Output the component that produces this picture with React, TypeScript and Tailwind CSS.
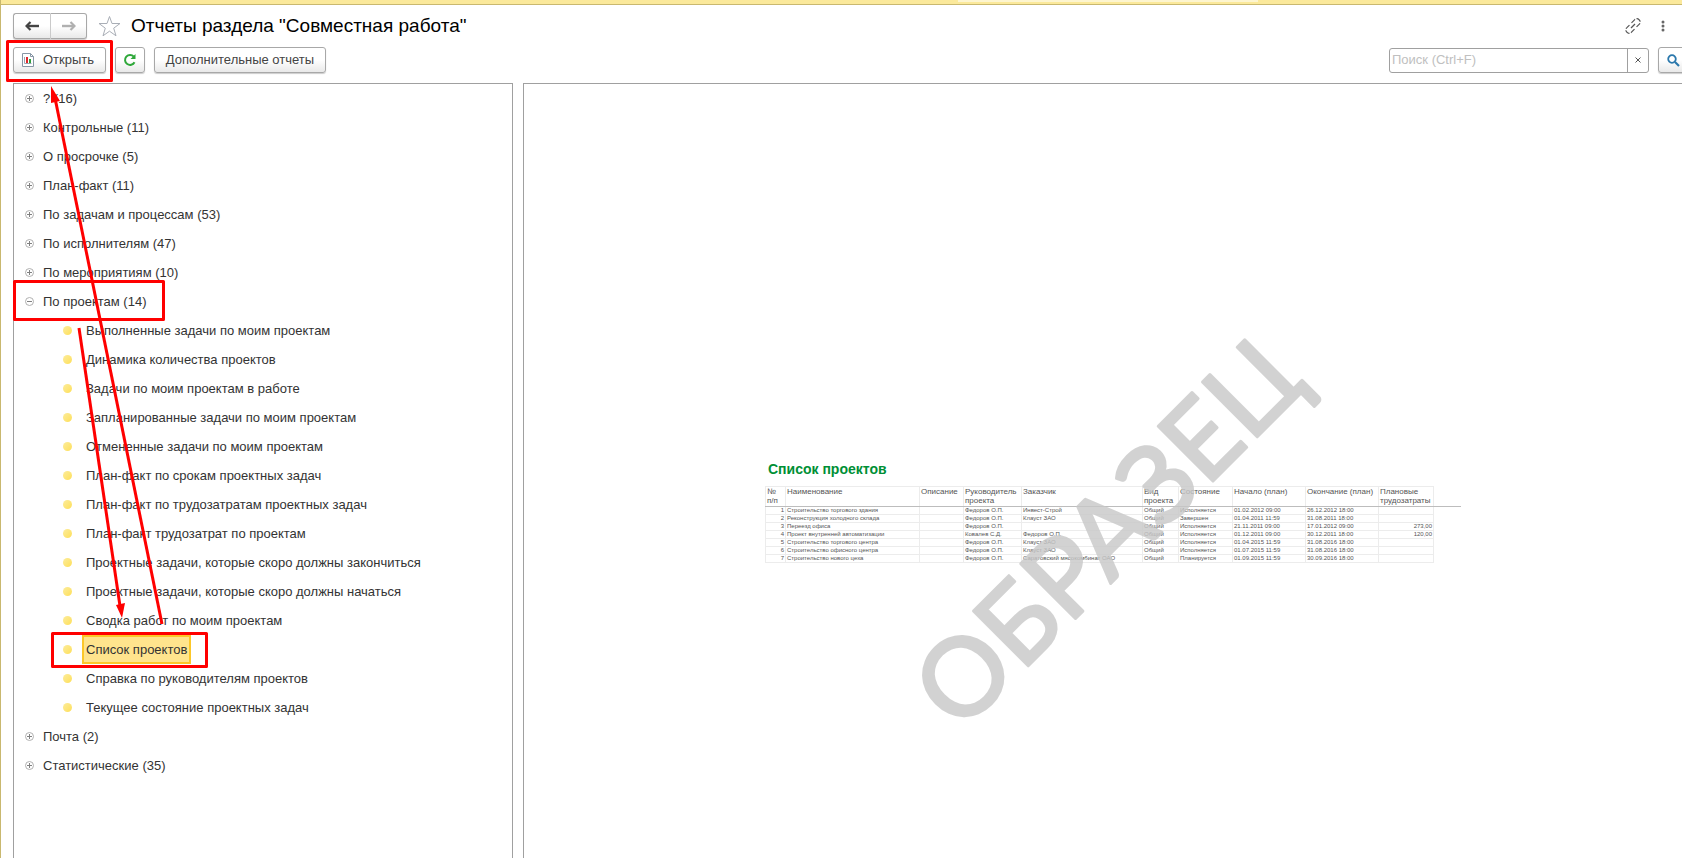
type Group = { title: string; count: number; items?: string[] };

const groups: Group[] = [
  { title: "?", count: 16 },
  { title: "Контрольные", count: 11 },
  { title: "О просрочке", count: 5 },
  { title: "План-факт", count: 11 },
  { title: "По задачам и процессам", count: 53 },
  { title: "По исполнителям", count: 47 },
  { title: "По мероприятиям", count: 10 },
  {
    title: "По проектам",
    count: 14,
    items: [
      "Выполненные задачи по моим проектам",
      "Динамика количества проектов",
      "Задачи по моим проектам в работе",
      "Запланированные задачи по моим проектам",
      "Отмененные задачи по моим проектам",
      "План-факт по срокам проектных задач",
      "План-факт по трудозатратам проектных задач",
      "План-факт трудозатрат по проектам",
      "Проектные задачи, которые скоро должны закончиться",
      "Проектные задачи, которые скоро должны начаться",
      "Сводка работ по моим проектам",
      "Список проектов",
      "Справка по руководителям проектов",
      "Текущее состояние проектных задач",
    ],
  },
  { title: "Почта", count: 2 },
  { title: "Статистические", count: 35 },
];

const selected = "Список проектов";

const columns = [
  "№ п/п",
  "Наименование",
  "Описание",
  "Руководитель проекта",
  "Заказчик",
  "Вид проекта",
  "Состояние",
  "Начало (план)",
  "Окончание (план)",
  "Плановые трудозатраты",
];

const projects = [
  ["1", "Строительство торгового здания", "", "Федоров О.П.", "Инвест-Строй", "Общий", "Исполняется", "01.02.2012 09:00", "26.12.2012 18:00", ""],
  ["2", "Реконструкция холодного склада", "", "Федоров О.П.", "Клауст ЗАО", "Общий", "Завершен", "01.04.2011 11:59", "31.08.2011 18:00", ""],
  ["3", "Переезд офиса", "", "Федоров О.П.", "", "Общий", "Исполняется", "21.11.2011 09:00", "17.01.2012 09:00", "273,00"],
  ["4", "Проект внутренней автоматизации", "", "Ковалев С.Д.", "Федоров О.П.", "Общий", "Исполняется", "01.12.2011 09:00", "30.12.2011 18:00", "120,00"],
  ["5", "Строительство торгового центра", "", "Федоров О.П.", "Клауст ЗАО", "Общий", "Исполняется", "01.04.2015 11:59", "31.08.2016 18:00", ""],
  ["6", "Строительство офисного центра", "", "Федоров О.П.", "Клауст ЗАО", "Общий", "Исполняется", "01.07.2015 11:59", "31.08.2016 18:00", ""],
  ["7", "Строительство нового цеха", "", "Федоров О.П.", "Саратовский мясокомбинат ОАО", "Общий", "Планируется", "01.09.2015 11:59", "30.09.2016 18:00", ""],
];

const buttonClass =
  "flex items-center h-[26px] rounded-[3px] border border-[#a8a8a8] bg-linear-to-b from-white from-50% to-[#e9e9e9] text-[#444] shadow-[0_1px_1px_rgba(0,0,0,0.2)]";

function ToggleIcon({ open }: { open: boolean }) {
  return (
    <svg width="9" height="9" viewBox="0 0 9 9" fill="none">
      <circle cx="4.5" cy="4.5" r="4" stroke="#b0b0b0" />
      <path d={open ? "M2 4.5h5" : "M2 4.5h5M4.5 2v5"} stroke="#808080" />
    </svg>
  );
}

function ArrowIcon({ className }: { className: string }) {
  return (
    <svg width="14" height="10" viewBox="0 0 14 10" fill="none" stroke="currentColor" className={className}>
      <path d="M2 5h12" strokeWidth="2.4" />
      <path d="M5.500 1L1.500 5l4 4" strokeWidth="2.2" />
    </svg>
  );
}

function Header() {
  return (
    <header className="mt-2 flex h-[26px] items-center">
      <div className="flex">
        <button aria-label="Назад" className={`${buttonClass} w-[38px] justify-center rounded-r-none border-r-[#cfcfcf]`}>
          <ArrowIcon className="text-[#444]" />
        </button>
        <button aria-label="Вперед" className={`${buttonClass} w-[36px] justify-center rounded-l-none border-l-0`}>
          <ArrowIcon className="rotate-180 text-[#b0b0b0]" />
        </button>
      </div>
      <button aria-label="В избранное" className="ml-[11px]">
        <svg width="23" height="22" viewBox="0 0 23 22" fill="none">
          <path
            d="M11.500 1.500l2.500 7h8l-6.300 4.700 2.300 7.600-6.500-4.600-6.500 4.600 2.300-7.600L1 8.500h8z"
            stroke="#a9aeb6"
          />
        </svg>
      </button>
      <h1 className="ml-[10px] text-[19px] leading-6 text-black">Отчеты раздела "Совместная работа"</h1>
      <button aria-label="Ссылка" className="ml-auto">
        <svg width="16" height="16" viewBox="0 0 16 16" fill="none" stroke="#555" strokeWidth="1.200">
          <path d="M6.500 4.800l3-3a3 3 0 0 1 4.600 0 3 3 0 0 1 0 4.600l-3 3" strokeDasharray="5 1.500" />
          <path d="M9.500 11.200l-3 3a3 3 0 0 1-4.600 0 3 3 0 0 1 0-4.600l3-3" strokeDasharray="5 1.500" />
          <path d="M6 10l4-4" />
        </svg>
      </button>
      <button aria-label="Еще" className="mr-[38px] ml-[20px]">
        <svg width="4" height="12" viewBox="0 0 4 12" fill="#666">
          <circle cx="2" cy="2" r="1.500" />
          <circle cx="2" cy="6" r="1.500" />
          <circle cx="2" cy="10" r="1.500" />
        </svg>
      </button>
    </header>
  );
}

function Toolbar() {
  return (
    <div className="mt-2 flex items-center">
      <button className={`${buttonClass} w-[93px] gap-[9px] pl-2`}>
        <svg width="12" height="14" viewBox="0 0 12 14" fill="none">
          <path d="M.5.5h8l3 3v10H.5z" fill="#fff" stroke="#8796a5" />
          <path d="M8.500.5v3h3" stroke="#8796a5" />
          <path d="M2.500 4v6.500h7" stroke="#9aa7b3" />
          <path d="M4 4h2v6H4z" fill="#e0262b" />
          <path d="M7 6h2v4H7z" fill="#2f9e3c" />
        </svg>
        Открыть
      </button>
      <button aria-label="Обновить" className={`${buttonClass} ml-[9px] w-[30px] justify-center`}>
        <svg width="14" height="14" viewBox="0 0 14 14" fill="none">
          <path d="M11.500 9.200A5 5 0 1 1 10.800 3.600" stroke="#2fa83a" strokeWidth="2" />
          <path d="M12.500 1v5h-5z" fill="#2fa83a" />
        </svg>
      </button>
      <button className={`${buttonClass} ml-[9px] w-[172px] justify-center`}>Дополнительные отчеты</button>
      <div className="ml-auto flex h-[25px] w-[260px] rounded-[3px] border border-[#a0a0a0]">
        <input
          aria-label="Поиск"
          placeholder="Поиск (Ctrl+F)"
          className="min-w-0 flex-1 px-[2px] outline-none placeholder:text-[#c0c0c0]"
        />
        <button aria-label="Очистить" className="flex w-[21px] items-center justify-center border-l border-[#a0a0a0]">
          <svg width="6" height="6" viewBox="0 0 6 6">
            <path d="M.5.5l5 5M5.500.5l-5 5" stroke="#555" />
          </svg>
        </button>
      </div>
      <button aria-label="Найти" className={`${buttonClass} ml-[9px] w-[45px] pl-2`}>
        <svg width="13" height="13" viewBox="0 0 13 13" fill="none">
          <circle cx="5" cy="5" r="3.800" stroke="#2b78ac" strokeWidth="1.800" />
          <path d="M8 8l4 4" stroke="#2b78ac" strokeWidth="2.200" />
        </svg>
      </button>
    </div>
  );
}

function ReportTree() {
  return (
    <nav className="w-[500px] shrink-0 border border-b-0 border-[#a0a0a0]">
      <ul>
        {groups.map((group) => (
          <li key={group.title}>
            <button className="flex h-[29px] items-center gap-[9px] pl-[11px]">
              <ToggleIcon open={!!group.items} />
              <span>
                {group.title} ({group.count})
              </span>
            </button>
            {group.items && (
              <ul>
                {group.items.map((item) => (
                  <li key={item} className="flex h-[29px] items-center pl-[49px]">
                    <span className="size-[9px] rounded-full bg-linear-to-br from-[#fcec9a] to-[#fedf55]" />
                    <button
                      className={
                        item === selected
                          ? "ml-[10px] h-[29px] border-2 border-[#fcc729] bg-[#ffe48d] px-[2px]"
                          : "ml-[10px] h-[29px] border-2 border-transparent px-[2px]"
                      }
                    >
                      {item}
                    </button>
                  </li>
                ))}
              </ul>
            )}
          </li>
        ))}
      </ul>
    </nav>
  );
}

function ReportPreview() {
  return (
    <section className="flex flex-1 justify-center border border-b-0 border-[#a0a0a0]">
      <div className="relative mt-[377px] w-[696px] text-[#555]">
        <h2 className="pl-[3px] text-[14px] leading-4 font-bold text-[#008f35]">Список проектов</h2>
        <table className="mt-[9px] w-[668px] table-fixed border-collapse">
          <colgroup>
            <col className="w-[20px]" />
            <col className="w-[134px]" />
            <col className="w-[44px]" />
            <col className="w-[58px]" />
            <col className="w-[121px]" />
            <col className="w-[36px]" />
            <col className="w-[54px]" />
            <col className="w-[73px]" />
            <col className="w-[73px]" />
            <col className="w-[55px]" />
          </colgroup>
          <thead>
            <tr className="h-[20px]">
              {columns.map((name) => (
                <th key={name} className="border border-[#ececec] px-px text-left align-top text-[8px] leading-[9px] font-normal">
                  {name}
                </th>
              ))}
            </tr>
          </thead>
          <tbody>
            {projects.map((row) => (
              <tr key={row[0]} className="h-[8px]">
                {row.map((cell, i) => (
                  <td
                    key={i}
                    className={`border border-[#ececec] px-px text-[6px] leading-[7px] whitespace-nowrap ${i === 0 || i === 9 ? "text-right" : ""}`}
                  >
                    {cell}
                  </td>
                ))}
              </tr>
            ))}
          </tbody>
        </table>
        <div className="absolute top-[45px] left-0 h-px w-full bg-[#bdbdbd]" />
        {/* Watermark over the sample */}
        <svg width="696" height="377" className="pointer-events-none absolute -top-[120px] left-0 overflow-visible">
          <text
            transform="translate(195 393) rotate(-45)"
            className="fill-[#c8c8c8] stroke-[#c8c8c8] font-['Lato'] text-[108px]"
            strokeWidth="3"
            strokeLinejoin="round"
            opacity="0.8"
          >
            ОБРАЗЕЦ
          </text>
        </svg>
      </div>
    </section>
  );
}

function Annotations() {
  return (
    <svg width="220" height="680" fill="none" className="pointer-events-none absolute top-0 left-0">
      <g stroke="#f00" strokeWidth="3" strokeLinejoin="round">
        <rect x="6.500" y="41.500" width="104" height="39" />
        <rect x="13.500" y="281.500" width="149" height="38" />
        <rect x="51.500" y="633.500" width="154" height="33" />
        <path d="M161 624L54 98" />
        <path d="M78 328L119 606" />
      </g>
      <path d="M50 86l9 15-9 2z" fill="#f00" />
      <path d="M121 618l-6-13 9-2z" fill="#f00" />
    </svg>
  );
}

export default function App() {
  return (
    <div className="relative flex min-h-screen flex-col overflow-hidden border-l border-[#c9b86f] bg-white font-['Liberation_Sans',sans-serif] text-[13px] text-[#333]">
      <div className="flex h-[5px] justify-end border-b border-[#c9b86f] bg-[#fbe99b]">
        <div className="mr-[424px] h-[2px] w-[300px] bg-[#fdf5cf]" />
      </div>
      <div className="-mr-[21px] flex flex-1 flex-col pl-3">
        <Header />
        <Toolbar />
        <main className="mt-[10px] flex flex-1 gap-[10px]">
          <ReportTree />
          <ReportPreview />
        </main>
      </div>
      <Annotations />
    </div>
  );
}
